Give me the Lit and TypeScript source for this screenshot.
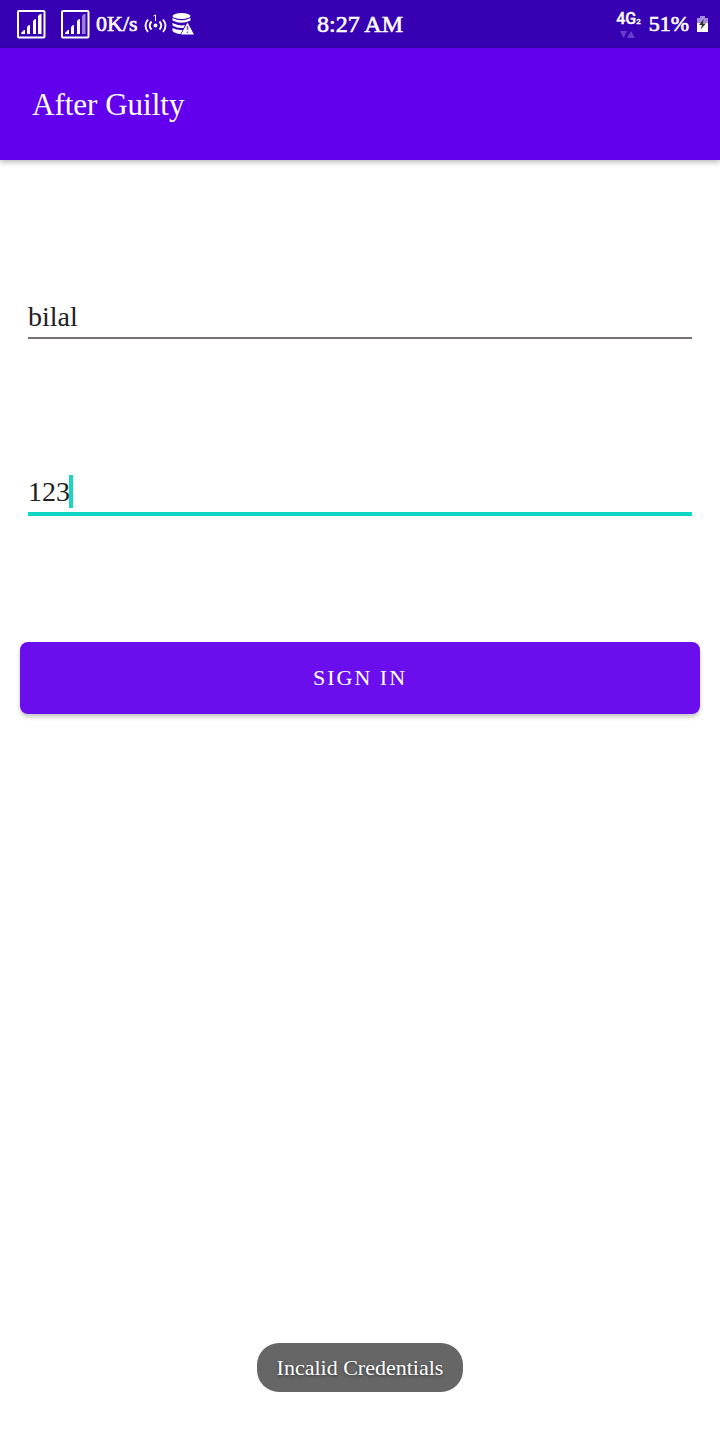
import { LitElement, html, css, svg } from "lit";
import { customElement, property, state } from "lit/decorators.js";

@customElement("signal-icon")
class SignalIcon extends LitElement {
  @property({ type: Number }) level = 4;

  static styles = css`
    :host { display: block; width: 30px; height: 30px; }
    svg { display: block; }
  `;

  render() {
    const bars = [
      "M5 25V24L8 21H9V25Z",
      "M11 25V18L13 16H14V25Z",
      "M17 25V12L19 10H20V25Z",
      "M22 25V7L24 5H25.500V25Z",
    ];
    return html`<svg width="30" height="30" viewBox="0 0 30 30" fill="#fff" aria-hidden="true">
      <rect x="2" y="2" width="26.500" height="26.500" rx="1" fill="none" stroke="#fff" stroke-width="2" />
      ${bars.map((d, i) => svg`<path d=${d} opacity=${i < this.level ? 1 : 0.5} />`)}
    </svg>`;
  }
}

@customElement("status-bar")
class StatusBar extends LitElement {
  static styles = css`
    :host {
      display: grid;
      grid-template-columns: 1fr auto 1fr;
      align-items: center;
      height: 48px;
      padding: 0 12px;
      background: #3700b3;
      color: #fff;
      font: 22px/28px "Liberation Serif", serif;
      -webkit-text-stroke: 0.6px #fff;
    }
    svg { display: block; }
    .left, .right { display: flex; align-items: center; }
    .left { padding-left: 4px; }
    .right { justify-content: flex-end; gap: 8px; }
    .second { margin-left: 14px; }
    .speed { margin: 0 6px; }
    .data { margin-left: 5px; }
    .time { font-size: 24px; }
    .net {
      font: 500 16px/16px Roboto, sans-serif;
      -webkit-text-stroke: 0.3px #fff;
      display: grid;
      justify-items: center;
    }
    .net small { font-size: 8px; }
  `;

  render() {
    return html`
      <div class="left">
        <signal-icon level="4"></signal-icon>
        <signal-icon class="second" level="3"></signal-icon>
        <span class="speed">0K/s</span>
        <svg width="23" height="24" viewBox="0 0 23 24" fill="none" stroke="#fff" stroke-width="1.900" aria-hidden="true">
          <path d="M4 7.500Q-1 13.500 4 20M7.500 9.500Q4 13.500 7.500 17.500M19 7.500Q24 13.500 19 20M15.500 9.500Q19 13.500 15.500 17.500" />
          <circle cx="11.500" cy="13.500" r="1.900" fill="#fff" stroke="none" />
          <path d="M9.500 4L11.500 3V9" stroke-width="1" />
        </svg>
        <svg class="data" width="22" height="24" viewBox="0 0 22 24" aria-hidden="true">
          <g fill="#fff">
            <ellipse cx="9.500" cy="4" rx="9" ry="3" />
            <path d="M.5 6Q9.500 10.500 18.500 6V8.500Q9.500 13 .5 8.500Z" />
            <path d="M.5 11Q7 14.500 13 13L11.500 16Q5 16.500 .5 13.500Z" />
            <path d="M.5 16Q5 18.500 10.500 18L8.500 22Q3 21.500 .5 19Z" />
          </g>
          <path d="M15.500 10.500L22 22.500H9Z" fill="#fff" />
          <path d="M15.500 14V18M15.500 19.500V21" stroke="#7a55cc" stroke-width="1.500" />
        </svg>
      </div>
      <time class="time">8:27 AM</time>
      <div class="right">
        <span class="net">
          <span>4G<small>2</small></span>
          <svg width="16" height="8" viewBox="0 0 16 8" fill="#6840c8" aria-hidden="true">
            <path d="M0 1H7L3.500 8ZM7 8L11 1L15 8Z" />
          </svg>
        </span>
        <span>51%</span>
        <svg width="11" height="16" viewBox="0 0 11 16" aria-hidden="true">
          <path d="M3 0H8V2H11V7H0V2H3Z" fill="#a58be0" />
          <path d="M0 7H11V16H0Z" fill="#fff" />
          <path d="M6.500 3L2 9H5L3.500 13.500L9 7.500H6Z" fill="#333" />
        </svg>
      </div>
    `;
  }
}

@customElement("app-root")
class AppRoot extends LitElement {
  @state() private message = "Incalid Credentials";

  static styles = css`
    :host {
      display: flex;
      flex-direction: column;
      min-height: 100vh;
      box-sizing: border-box;
      padding-bottom: 48px;
      background: #fff;
      color: #212121;
      font-family: "Liberation Serif", serif;
    }
    .app-bar {
      display: flex;
      align-items: center;
      box-sizing: border-box;
      height: 112px;
      padding: 2px 32px 0;
      background: #6200ee;
      color: #fff;
      box-shadow: 0 2px 6px rgba(0, 0, 0, 0.3);
    }
    h1 { margin: 0; font-size: 31px; line-height: 36px; font-weight: 400; }
    form { display: flex; flex-direction: column; padding: 136px 20px 0; }
    .field {
      display: flex;
      align-items: center;
      box-sizing: border-box;
      height: 43px;
      margin: 0 8px 132px;
      border-bottom: 2px solid #757175;
    }
    .field.focused {
      height: 45px;
      margin-bottom: 126px;
      border-bottom: 4px solid #0fd5c5;
    }
    input {
      flex: 1;
      min-width: 0;
      padding: 0;
      border: 0;
      outline: 0;
      background: none;
      color: inherit;
      font: 28px/32px "Liberation Serif", serif;
    }
    .focused input { flex: none; field-sizing: content; }
    .caret { width: 4px; height: 33px; margin-left: -1px; background: #1dd3c4; }
    button {
      height: 72px;
      border: 0;
      border-radius: 8px;
      background: #6a0eee;
      color: #fff;
      font: 22px/28px "Liberation Serif", serif;
      letter-spacing: 2px;
      box-shadow: 0 3px 4px rgba(0, 0, 0, 0.22);
    }
    .toast {
      margin: auto auto 0;
      padding: 11px 20px 10px;
      border-radius: 22px;
      background: #666;
      color: #fff;
      font-size: 22px;
      line-height: 28px;
      text-shadow: 0 1px 3px rgba(0, 0, 0, 0.5);
    }
  `;

  render() {
    return html`
      <status-bar></status-bar>
      <header class="app-bar"><h1>After Guilty</h1></header>
      <form @submit=${(e: Event) => e.preventDefault()}>
        <label class="field">
          <input type="text" aria-label="Username" .value=${"bilal"} />
        </label>
        <label class="field focused">
          <input type="text" aria-label="Password" .value=${"123"} />
          <span class="caret"></span>
        </label>
        <button type="submit">SIGN IN</button>
      </form>
      <div class="toast" role="status">${this.message}</div>
    `;
  }
}
